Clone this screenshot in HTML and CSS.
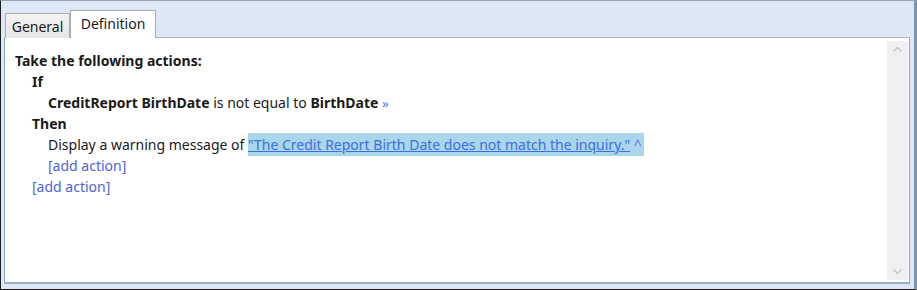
FILE: index.html
```html
<!DOCTYPE html>
<html>
<head>
<meta charset="utf-8">
<link rel="stylesheet" href="styles.css">
</head>
<body>
<div class="window">
  <div class="tabs">
    <div class="tab">General</div>
    <div class="tab active">Definition</div>
  </div>
  <div class="panel">
    <div class="content">
      <div class="line l0 b">Take the following actions:</div>
      <div class="line l1 b">If</div>
      <div class="line l2"><b>CreditReport BirthDate</b> is not equal to <b>BirthDate</b> <span class="more">»</span></div>
      <div class="line l1 b">Then</div>
      <div class="line l2">Display a warning message of <span class="sel"><a class="link">"The Credit Report Birth Date does not match the inquiry."</a> <span class="caret">^</span></span></div>
      <div class="line l2"><a class="add">[add action]</a></div>
      <div class="line l1"><a class="add">[add action]</a></div>
    </div>
    <div class="scrollbar">
      <svg class="arrow" width="21" height="17" viewBox="0 0 21 17"><path d="M6.5 10.5 L10.5 6.5 L14.5 10.5" fill="none" stroke="#c2c2c2" stroke-width="1.3"/></svg>
      <svg class="arrow" width="21" height="17" viewBox="0 0 21 17"><path d="M6.5 6.5 L10.5 10.5 L14.5 6.5" fill="none" stroke="#c2c2c2" stroke-width="1.3"/></svg>
    </div>
  </div>
</div>
</body>
</html>
```

FILE: styles.css
```css
* { box-sizing: border-box; }
html, body { margin: 0; padding: 0; }
body {
  font-family: "Noto Sans", "Open Sans", sans-serif;
  font-size: 14px;
  color: #1a1a1a;
  background: #ffffff;
}
.window {
  width: 917px;
  height: 290px;
  background: #dde7f5;
  border: 1px solid #1e1e1e;
  border-top-color: #9aa7b8;
  border-right: 3px solid #7f93ad;
  padding: 9px 4px 5px 3px;
  display: flex;
  flex-direction: column;
}
.tabs {
  display: flex;
  align-items: flex-end;
  margin-left: 1px;
  margin-bottom: -1px;
  position: relative;
  z-index: 1;
  height: 28px;
}
.tab {
  height: 25px;
  width: 65px;
  border: 1px solid #acacac;
  border-bottom: none;
  background: linear-gradient(#f3f3f3, #e6e6e6);
  display: flex;
  align-items: center;
  justify-content: center;
  padding-top: 1px;
  color: #1a1a1a;
}
.tab.active {
  height: 28px;
  width: 86px;
  margin-left: 0;
  background: #ffffff;
  padding-bottom: 3px;
}
.panel {
  flex: 1;
  background: #ffffff;
  border: 1px solid #b5b5b5;
  border-left-color: #84a7d6;
  border-right-color: #94aac6;
  border-bottom: 2px solid #9bb0c7;
  display: flex;
  min-height: 0;
}
.content {
  flex: 1;
  padding: 12px 0 0 10px;
}
.line {
  height: 21px;
  line-height: 21px;
  white-space: nowrap;
}
.l1 { padding-left: 17px; }
.l2 { padding-left: 33px; }
.b, b { font-weight: bold; }
.more { color: #5a74df; font-size: 13px; }
.sel { background: #a9d6ea; padding: 2px 0; }
.link {
  color: #3f6ee0;
  text-decoration: underline;
}
.caret { color: #5a74df; padding-right: 2px; }
.add { color: #4f63d8; }
.scrollbar {
  width: 21px;
  margin: 3px 1px 2px 0;
  background: #f0f0f0;
  display: flex;
  flex-direction: column;
  justify-content: space-between;
}
.arrow { display: block; }
```
